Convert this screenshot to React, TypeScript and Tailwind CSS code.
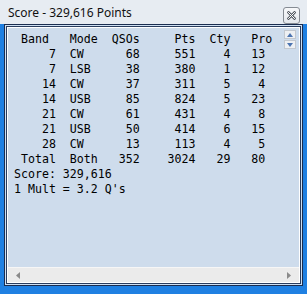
import React from "react";

const rows: [string, string, string, string, string, string][] = [
  ["7", "CW", "68", "551", "4", "13"],
  ["7", "LSB", "38", "380", "1", "12"],
  ["14", "CW", "37", "311", "5", "4"],
  ["14", "USB", "85", "824", "5", "23"],
  ["21", "CW", "61", "431", "4", "8"],
  ["21", "USB", "50", "414", "6", "15"],
  ["28", "CW", "13", "113", "4", "5"],
  ["Total", "Both", "352", "3024", "29", "80"],
];

function line(r: [string, string, string, string, string, string]) {
  return (
    r[0].padStart(6) +
    "  " +
    r[1].padEnd(6) +
    r[2].padStart(4) +
    r[3].padStart(8) +
    r[4].padStart(5) +
    r[5].padStart(5)
  );
}

const text = [
  " Band   Mode  QSOs     Pts  Cty   Pro",
  ...rows.map(line),
  "Score: 329,616",
  "1 Mult = 3.2 Q's",
].join("\n");

export default function App() {
  return (
    <div className="w-[307px] h-[294px] flex flex-col bg-[#e7ecf2] overflow-hidden">
      <div className="h-[24px] flex items-start justify-between pl-[8px] pr-[7px]">
        <div
          className="mt-[5px] text-[12px] leading-[16px] text-[#111]"
          style={{ fontFamily: '"Noto Sans", "Open Sans", sans-serif' }}
        >
          Score - 329,616 Points
        </div>
        <div className="mt-[7px] w-[17px] h-[17px] rounded-[3px] border border-[#858b93] bg-gradient-to-b from-[#f7f8fa] to-[#e3e7ec] flex items-center justify-center">
          <svg width="9" height="9" viewBox="0 0 9 9">
            <path d="M1.5 1.5 L7.5 7.5 M7.5 1.5 L1.5 7.5" stroke="#555b63" strokeWidth="2.6" strokeLinecap="square" />
            <path d="M1.5 1.5 L7.5 7.5 M7.5 1.5 L1.5 7.5" stroke="#ffffff" strokeWidth="1" strokeLinecap="square" />
          </svg>
        </div>
      </div>
      <div className="flex-1 flex flex-col bg-[#1f80e2] px-[4px] pb-[8px]">
        <div className="flex-1 flex flex-col border border-[#1a2c4e]">
          <div className="flex-1 flex flex-col border border-[#cfe0f3]">
            <div className="flex-1 flex flex-col border border-[#2a3d5e]">
              <div className="flex-1 flex flex-col border border-[#ffffff]">
                <div className="flex-1 relative bg-[#cedcec]">
                  <pre
                    className="pl-[6px] pt-[4px] text-[11.6px] leading-[15px] text-black"
                    style={{ fontFamily: '"DejaVu Sans Mono", monospace' }}
                  >
                    {text}
                  </pre>
                  <div className="absolute top-[2px] right-[3px] flex flex-col gap-[1px]">
                    <div className="w-[12px] h-[9px] border border-[#c3c8cf] bg-[#eef0f3] flex items-center justify-center">
                      <svg width="6" height="4" viewBox="0 0 6 4">
                        <path d="M0 4 L3 0 L6 4 Z" fill="#4c74b0" />
                      </svg>
                    </div>
                    <div className="w-[12px] h-[9px] border border-[#c3c8cf] bg-[#eef0f3] flex items-center justify-center">
                      <svg width="6" height="4" viewBox="0 0 6 4">
                        <path d="M0 0 L6 0 L3 4 Z" fill="#4c74b0" />
                      </svg>
                    </div>
                  </div>
                </div>
                <div className="h-[15px] bg-[#ebebeb] border-t border-[#f6f6f6] flex items-center justify-between pl-[8px] pr-[8px]">
                  <svg width="4" height="7" viewBox="0 0 4 7">
                    <path d="M4 0 L0 3.5 L4 7 Z" fill="#8a8a8a" />
                  </svg>
                  <svg width="4" height="7" viewBox="0 0 4 7">
                    <path d="M0 0 L4 3.5 L0 7 Z" fill="#8a8a8a" />
                  </svg>
                </div>
              </div>
            </div>
          </div>
        </div>
      </div>
    </div>
  );
}
